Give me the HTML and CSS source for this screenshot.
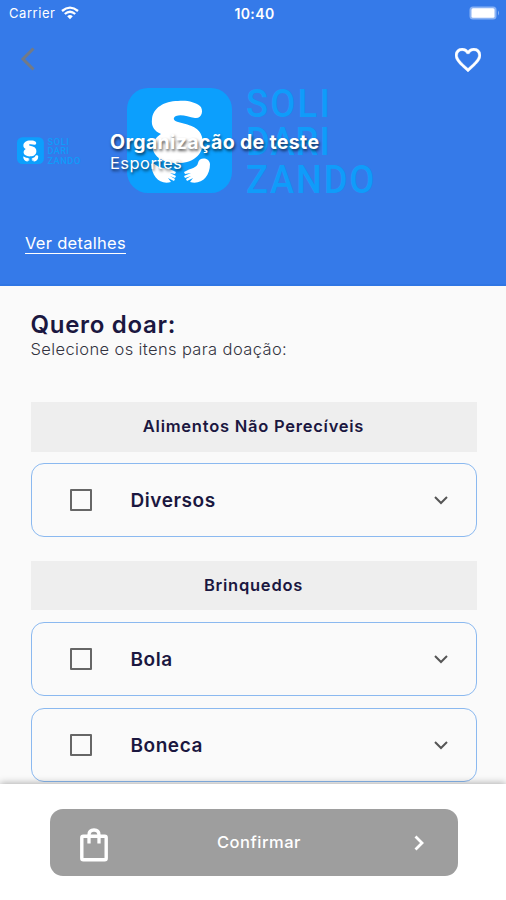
FILE: index.html
```html
<!DOCTYPE html>
<html lang="pt-BR">
<head>
<meta charset="utf-8">
<meta name="viewport" content="width=device-width, initial-scale=1">
<title>Quero doar</title>
<link rel="stylesheet" href="styles.css">
</head>
<body>
<svg class="defs" aria-hidden="true">
  <symbol id="logo" viewBox="0 0 250 112">
    <rect width="105" height="105" rx="21" fill="#0c9ffd"/>
    <path fill="#fff" d="M51 13C60 12 68 14 73 18C77 22 75 31 68 30C61 29 55 26 49 28C45 30 47 33 51 34C61 37 72 38 75 49C79 65 67 75 52 75C37 76 24 68 26 57C27 51 31 48 34 46C27 43 24 38 25 31C26 20 37 13 51 13Z"/>
    <path fill="#fff" d="M24 76C27 74 30 79 35 80C41 80 45 82 49 84L48 86L43 85L49 88L48 90L43 88L48 91L47 93L41 90L44 94C33 97 25 89 24 76Z"/>
    <path fill="#fff" d="M83 76C82 69 72 69 71 75C70 80 64 80 57 84L58 86L64 85L57 88L58 90L64 88L59 91L60 93L66 90L63 94C74 97 83 89 83 76Z"/>
    <g class="wordmark" transform="translate(119 0) scale(.93 1)">
      <text y="29" textLength="90" lengthAdjust="spacing">SOLI</text>
      <text y="67" textLength="90" lengthAdjust="spacing">DARI</text>
      <text y="105" textLength="138" lengthAdjust="spacing">ZANDO</text>
    </g>
  </symbol>
  <symbol id="chevron" viewBox="0 0 16 10">
    <path d="M2 2L8 8L14 2" fill="none" stroke="currentColor" stroke-width="2"/>
  </symbol>
</svg>
<div class="screen">
  <header class="hero">
    <svg class="cover"><use href="#logo"/></svg>
    <div class="status">
      <span class="carrier">Carrier
        <svg class="wifi" viewBox="0 0 18 14" fill="none" stroke="#fff"><path d="M1 5Q9 -1.800 17 5M3.800 8Q9 3.500 14.200 8" stroke-width="2.300"/><path d="M6.200 10.200Q9 8 11.800 10.200L9 13.200Z" fill="#fff" stroke="none"/></svg>
      </span>
      <span class="time">10:40</span>
      <svg class="battery" viewBox="0 0 31 14"><rect x=".5" y=".5" width="27" height="13" rx="3.500" fill="#8bb3f4"/><rect x="2.500" y="2.200" width="23" height="9.600" rx="1.500" fill="#fff"/><path d="M29 4.500Q31 7 29 9.500Z" fill="#8bb3f4"/></svg>
    </div>
    <nav class="nav">
      <svg class="back" viewBox="0 0 16 24"><path d="M13.500 1.500L3 12L13.500 22.500" fill="none" stroke="#727a86" stroke-width="3"/></svg>
      <svg class="heart" viewBox="2 3 20 18.400"><path fill="#fff" stroke="#fff" stroke-width=".3" d="M16.500 3c-1.740 0-3.410.81-4.500 2.090C10.910 3.810 9.240 3 7.500 3 4.420 3 2 5.420 2 8.500c0 3.780 3.400 6.860 8.550 11.540L12 21.350l1.450-1.320C18.600 15.360 22 12.280 22 8.500 22 5.420 19.580 3 16.500 3zm-4.400 15.550l-.1.100-.1-.1C7.140 14.240 4 11.390 4 8.500 4 6.500 5.500 5 7.500 5c1.540 0 3.040.99 3.570 2.360h1.870C13.460 5.990 14.960 5 16.500 5c2 0 3.500 1.500 3.500 3.500 0 2.890-3.140 5.740-7.900 10.050z"/></svg>
    </nav>
    <div class="org">
      <svg class="avatar"><use href="#logo"/></svg>
      <div>
        <h1 class="org-name">Organização de teste</h1>
        <p class="org-type">Esportes</p>
      </div>
    </div>
    <a class="details">Ver detalhes</a>
  </header>
  <main class="content">
    <h2 class="title">Quero doar:</h2>
    <p class="subtitle">Selecione os itens para doação:</p>
    <h3 class="category">Alimentos Não Perecíveis</h3>
    <div class="item"><span class="check"></span><span class="label">Diversos</span><svg class="down"><use href="#chevron"/></svg></div>
    <h3 class="category next">Brinquedos</h3>
    <div class="item"><span class="check"></span><span class="label">Bola</span><svg class="down"><use href="#chevron"/></svg></div>
    <div class="item"><span class="check"></span><span class="label">Boneca</span><svg class="down"><use href="#chevron"/></svg></div>
  </main>
  <footer class="footer">
    <div class="confirm">
      <svg class="bag" viewBox="0 0 28 34" fill="none" stroke="#fff"><rect x="1.800" y="8.300" width="24.400" height="23.400" rx="1.500" stroke-width="3.400"/><path d="M9 15.500V7Q9 2 14 2T19 7V15.500" stroke-width="3.300"/></svg>
      <span class="confirm-label">Confirmar</span>
      <svg class="go" viewBox="0 0 10 16"><path d="M1.500 1.500L8 8L1.500 14.500" fill="none" stroke="#fff" stroke-width="2.800"/></svg>
    </div>
  </footer>
</div>
</body>
</html>
```
FILE: styles.css
```css
* { box-sizing: border-box; margin: 0; }
body { font-family: Inter, sans-serif; color: #1b1740; }
svg { display: block; flex: none; }
.defs { position: absolute; width: 0; height: 0; }
.screen { width: 506px; height: 900px; display: flex; flex-direction: column; overflow: hidden; background: #fafafa; }

.hero { position: relative; flex: none; height: 286px; background: #357ae9; border-bottom: 2px solid #2f76e4; color: #fff; }
.cover { position: absolute; left: 127px; top: 88px; width: 250px; height: 112px; }
.wordmark { font-family: Roboto, sans-serif; font-size: 39px; font-weight: 500; fill: #0f9cfa; }
.status { display: grid; grid-template-columns: 1fr auto 1fr; align-items: center; height: 26px; padding: 0 6px 0 9px; font-size: 13px; }
.carrier { display: flex; align-items: center; gap: 6px; letter-spacing: .55px; }
.wifi { width: 18px; height: 14px; }
.time { font-size: 14px; font-weight: 600; letter-spacing: .4px; }
.battery { width: 31px; height: 14px; justify-self: end; }
.nav { display: flex; justify-content: space-between; padding: 21px 25px 0 20px; }
.back { width: 16px; height: 24px; }
.heart { width: 26px; height: 24px; margin-top: 1px; }
.org { position: relative; display: flex; padding: 58px 0 0 17px; }
.avatar { width: 64px; height: 29px; margin: 7px 29px 0 0; }
.org-name { font-size: 19.500px; line-height: 24px; font-weight: 700; letter-spacing: .36px; text-shadow: 1px 2px 3px rgba(0,0,0,.65); }
.org-type { font-size: 16.500px; line-height: 18px; letter-spacing: .45px; text-shadow: 1px 2px 3px rgba(0,0,0,.65); }
.details { display: inline-block; margin: 62px 0 0 25px; border-bottom: 1px solid #fff; font-size: 16.500px; line-height: 19px; letter-spacing: .28px; }

.content { flex: none; height: 498px; padding: 24px 29.500px 0 30.500px; }
.title { font-size: 24px; line-height: 30px; font-weight: 600; letter-spacing: .7px; }
.subtitle { margin-bottom: 42px; font-size: 16.500px; line-height: 19px; height: 20px; font-weight: 300; letter-spacing: .38px; color: #33333f; }
.category { height: 50px; margin-bottom: 11px; background: #eee; font-size: 16.500px; line-height: 49px; font-weight: 600; letter-spacing: .76px; text-align: center; }
.category.next { margin-top: 24px; height: 49px; margin-bottom: 12px; }
.item { display: flex; align-items: center; height: 74px; margin-bottom: 12px; padding: 0 27px 0 38.500px; border: 1.500px solid #8bb9f0; border-radius: 13px; }
.check { width: 22px; height: 22px; margin-right: 38.500px; border: 2px solid #666; border-radius: 1px; }
.label { flex: 1; padding-top: 2px; font-size: 19px; line-height: 24px; font-weight: 600; letter-spacing: .55px; }
.down { width: 16px; height: 10px; color: #555; }

.footer { position: relative; flex: 1; padding: 25px 48.500px 25px 49.500px; background: #fff; box-shadow: 0 -1px 7px rgba(0,0,0,.3); }
.confirm { display: flex; align-items: center; justify-content: space-between; height: 67px; padding: 0 34px 0 30px; border-radius: 13px; background: #9e9e9e; color: #fff; }
.bag { width: 28px; height: 34px; margin-top: 4px; }
.confirm-label { margin: -2px 3px 0 0; font-size: 16.500px; font-weight: 500; letter-spacing: .5px; }
.go { width: 10px; height: 16px; }
```
